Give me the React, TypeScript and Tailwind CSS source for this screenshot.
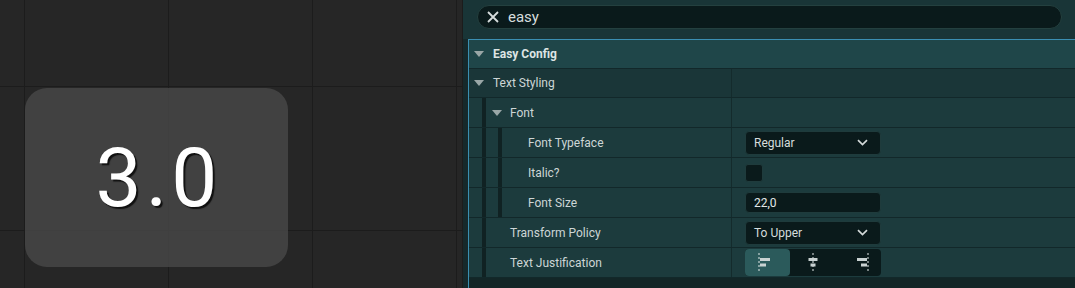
import React from "react";

const Triangle = () => (
  <svg width="10" height="6" viewBox="0 0 10 6" className="shrink-0">
    <path d="M0 0H10L5 6Z" fill="#9aa7a7" />
  </svg>
);

const Chevron = () => (
  <svg width="11" height="7" viewBox="0 0 11 7" className="shrink-0">
    <path d="M1 1.2L5.5 5.5L10 1.2" fill="none" stroke="#d3dada" strokeWidth="1.7" />
  </svg>
);

const Bar = () => <div className="w-[4px] shrink-0 self-stretch bg-[#102223]" />;

const AlignIcon = ({ side }: { side: "left" | "center" | "right" }) => {
  const line = side === "left" ? 3 : side === "center" ? 12 : 21;
  const top = side === "left" ? [4, 14] : side === "center" ? [7.5, 16.5] : [10, 20];
  const bot = side === "left" ? [4, 10] : side === "center" ? [9.5, 14.5] : [14, 20];
  return (
    <svg width="24" height="22" viewBox="0 0 24 22">
      <line x1={line} y1="1" x2={line} y2="21" stroke="#e2e8e8" strokeWidth="1" strokeDasharray="2 2" />
      <rect x={top[0]} y="6" width={top[1] - top[0]} height="3" fill="#c9d2d2" />
      <rect x={bot[0]} y="11.5" width={bot[1] - bot[0]} height="3" fill="#c9d2d2" />
    </svg>
  );
};

const Dropdown = ({ label }: { label: string }) => (
  <div className="flex h-[24px] w-[136px] items-center justify-between rounded-[4px] border border-[#1f3b3c] bg-[#0a1a1b] pl-[8px] pr-[12px] text-[12px] text-[#d6dddd]">
    {label}
    <Chevron />
  </div>
);

const Row = ({
  left,
  right,
  bg = "bg-[#1c3b3d]",
  short = false,
}: {
  left: React.ReactNode;
  right?: React.ReactNode;
  bg?: string;
  short?: boolean;
}) => (
  <div className={`flex border-b border-[#12282a] ${short ? "h-[29px]" : "h-[30px]"} ${bg}`}>
    <div className="flex w-[262px] items-center text-[12px] text-[#cdd6d6]">{left}</div>
    <div className="w-px bg-[#142b2c]" />
    <div className="flex flex-1 items-center pl-[13px]">{right}</div>
  </div>
);

export default function App() {
  return (
    <div className="flex h-[288px] w-[1075px] overflow-hidden font-[Roboto,sans-serif]">
      {/* designer canvas */}
      <div className="relative h-full w-[463px] shrink-0 border-r border-[#1c1c1c] bg-[#262626] bg-[linear-gradient(to_right,#1c1c1c_1px,transparent_1px),linear-gradient(to_bottom,#1c1c1c_1px,transparent_1px)] bg-[size:144px_144px] bg-[position:24px_86px]">
        <div className="absolute left-[25px] top-[88px] flex h-[179px] w-[263px] items-center justify-center rounded-[22px] bg-[rgba(72,72,72,0.8)]">
          <span className="pl-[4px] text-[82px] leading-none tracking-[4px] text-white [text-shadow:2px_2px_1px_rgba(0,0,0,0.75)]">
            3.0
          </span>
        </div>
      </div>

      {/* details panel */}
      <div className="flex flex-1 flex-col bg-[#193537]">
        <div className="h-[39px] shrink-0 pl-[14px] pr-[13px] pt-[5px]">
          <div className="flex h-[24px] items-center rounded-full border border-[#24403f] bg-[#0a1a1b] pl-[9px]">
            <svg width="12" height="12" viewBox="0 0 12 12">
              <path d="M1 1L11 11M11 1L1 11" stroke="#d6dcdc" strokeWidth="1.8" />
            </svg>
            <span className="ml-[9px] text-[15px] leading-none text-[#d6dddd]">easy</span>
          </div>
        </div>

        <div className="flex flex-1">
          <div className="w-[5px] shrink-0 bg-[#16292b]" />
          <div className="flex flex-1 flex-col border-l border-t border-[#3b8fb2] bg-[#132728]">
            <div className="flex h-[29px] items-center border-b border-[#12282a] bg-[#1f4649] pl-[5px]">
              <Triangle />
              <span className="ml-[9px] text-[12px] font-bold text-[#dde4e4]">Easy Config</span>
            </div>

            <Row
              short
              bg="bg-[#1a3638]"
              left={
                <div className="flex items-center pl-[5px]">
                  <Triangle />
                  <span className="ml-[9px]">Text Styling</span>
                </div>
              }
            />

            <Row
              left={
                <div className="flex h-full items-center">
                  <div className="w-[13px] shrink-0" />
                  <Bar />
                  <div className="w-[6px] shrink-0" />
                  <Triangle />
                  <span className="ml-[8px]">Font</span>
                </div>
              }
            />

            <Row
              left={
                <div className="flex h-full items-center">
                  <div className="w-[13px] shrink-0" />
                  <Bar />
                  <div className="w-[12px] shrink-0" />
                  <Bar />
                  <span className="ml-[26px]">Font Typeface</span>
                </div>
              }
              right={<Dropdown label="Regular" />}
            />

            <Row
              left={
                <div className="flex h-full items-center">
                  <div className="w-[13px] shrink-0" />
                  <Bar />
                  <div className="w-[12px] shrink-0" />
                  <Bar />
                  <span className="ml-[26px]">Italic?</span>
                </div>
              }
              right={<div className="h-[18px] w-[18px] rounded-[3px] border border-[#1f3b3c] bg-[#0a1a1b]" />}
            />

            <Row
              left={
                <div className="flex h-full items-center">
                  <div className="w-[13px] shrink-0" />
                  <Bar />
                  <div className="w-[12px] shrink-0" />
                  <Bar />
                  <span className="ml-[26px]">Font Size</span>
                </div>
              }
              right={
                <div className="flex h-[21px] w-[136px] items-center rounded-[4px] border border-[#1f3b3c] bg-[#0a1a1b] pl-[8px] text-[12px] text-[#e2e8e8]">
                  22,0
                </div>
              }
            />

            <Row
              left={
                <div className="flex h-full items-center">
                  <div className="w-[13px] shrink-0" />
                  <Bar />
                  <span className="ml-[24px]">Transform Policy</span>
                </div>
              }
              right={<Dropdown label="To Upper" />}
            />

            <Row
              left={
                <div className="flex h-full items-center">
                  <div className="w-[13px] shrink-0" />
                  <Bar />
                  <span className="ml-[24px]">Text Justification</span>
                </div>
              }
              right={
                <div className="flex h-[27px] w-[136px] items-stretch rounded-[4px] bg-[#0a1a1b]">
                  <div className="flex w-[45px] items-center justify-center rounded-[4px] bg-[#2b5a5b]">
                    <AlignIcon side="left" />
                  </div>
                  <div className="flex w-[46px] items-center justify-center">
                    <AlignIcon side="center" />
                  </div>
                  <div className="flex w-[45px] items-center justify-center">
                    <AlignIcon side="right" />
                  </div>
                </div>
              }
            />
            <div className="flex-1 bg-[#132627]" />
          </div>
        </div>
      </div>
    </div>
  );
}
